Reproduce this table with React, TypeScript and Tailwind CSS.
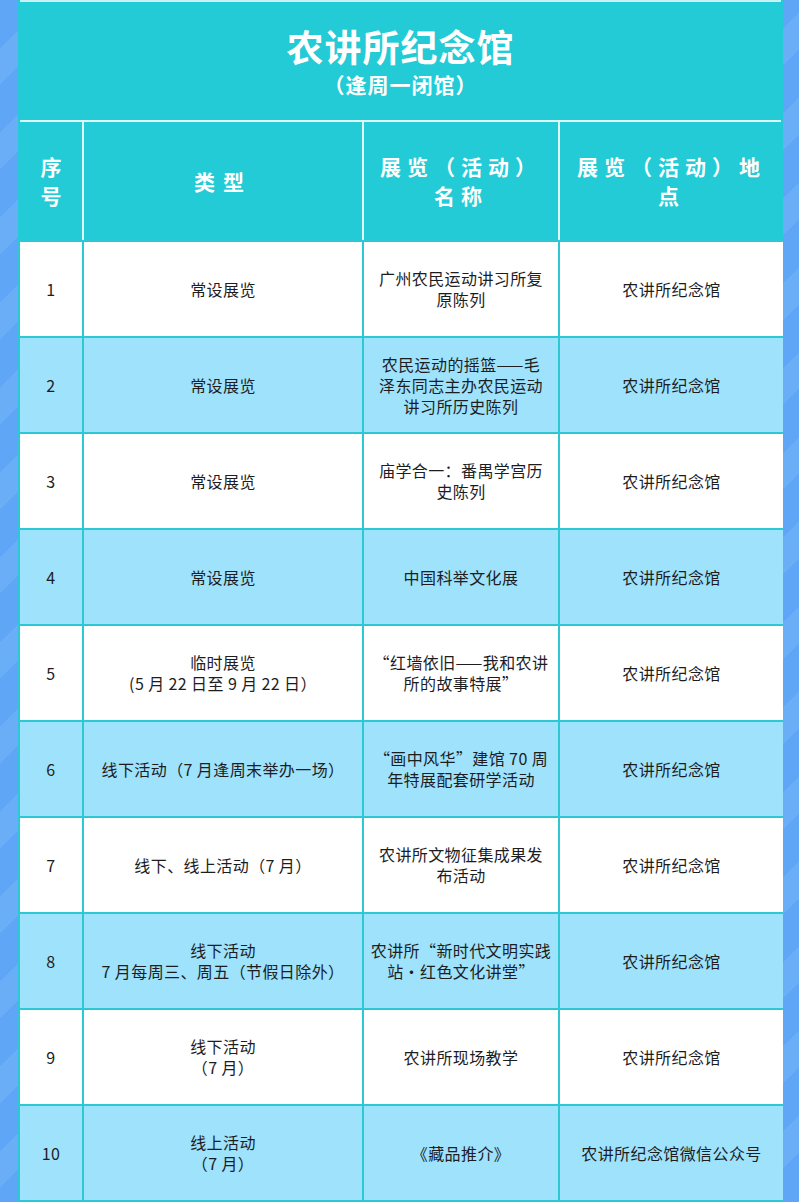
import * as React from 'react'

const rows: { no: string; type: string[]; name: string[]; place: string }[] = [
  { no: '1', type: ['常设展览'], name: ['广州农民运动讲习所复', '原陈列'], place: '农讲所纪念馆' },
  { no: '2', type: ['常设展览'], name: ['农民运动的摇篮——毛', '泽东同志主办农民运动', '讲习所历史陈列'], place: '农讲所纪念馆' },
  { no: '3', type: ['常设展览'], name: ['庙学合一：番禺学宫历', '史陈列'], place: '农讲所纪念馆' },
  { no: '4', type: ['常设展览'], name: ['中国科举文化展'], place: '农讲所纪念馆' },
  { no: '5', type: ['临时展览', '(5 月 22 日至 9 月 22 日）'], name: ['“红墙依旧——我和农讲', '所的故事特展”'], place: '农讲所纪念馆' },
  { no: '6', type: ['线下活动（7 月逢周末举办一场）'], name: ['“画中风华”建馆 70 周', '年特展配套研学活动'], place: '农讲所纪念馆' },
  { no: '7', type: ['线下、线上活动（7 月）'], name: ['农讲所文物征集成果发', '布活动'], place: '农讲所纪念馆' },
  { no: '8', type: ['线下活动', '7 月每周三、周五（节假日除外）'], name: ['农讲所“新时代文明实践', '站·红色文化讲堂”'], place: '农讲所纪念馆' },
  { no: '9', type: ['线下活动', '（7 月）'], name: ['农讲所现场教学'], place: '农讲所纪念馆' },
  { no: '10', type: ['线上活动', '（7 月）'], name: ['《藏品推介》'], place: '农讲所纪念馆微信公众号' },
]

function Lines({ lines }: { lines: string[] }) {
  return (
    <div className="text-center">
      {lines.map((l, i) => (
        <div key={i}>{l}</div>
      ))}
    </div>
  )
}

export default function App() {
  return (
    <div className="w-[799px] h-[1202px] overflow-hidden px-[18px] bg-[repeating-linear-gradient(135deg,#5fa6f7_0px,#5fa6f7_34px,#6aaef8_34px,#6aaef8_60px)] font-['Noto_Sans_CJK_SC','Noto_Sans',sans-serif]">
      <div className="w-[765px] border-x-2 border-[#22cbd6]">
        {/* Title */}
        <div className="h-[120px] border-t-2 border-[#c9f1f4] bg-[#22cbd6] flex flex-col items-center justify-center text-white font-bold">
          <div className="text-[37px] leading-[44px] tracking-[1px]">农讲所纪念馆</div>
          <div className="text-[21px] leading-[28px] mt-[2px] tracking-[1px]">（逢周一闭馆）</div>
        </div>

        {/* Header row */}
        <div className="grid grid-cols-[62px_278px_194px_223px] gap-x-[2px] border-t-2 border-[#dff7f9] bg-[#dff7f9] text-white font-bold text-[21px] leading-[29px]">
          <div className="h-[118px] -ml-[2px] pl-[2px] bg-[#22cbd6] flex items-center justify-center text-center">
            <div>序<br />号</div>
          </div>
          <div className="h-[118px] bg-[#22cbd6] flex items-center justify-center tracking-[8px]">类型</div>
          <div className="h-[118px] bg-[#22cbd6] flex items-center justify-center text-center tracking-[6px]">
            <div>展览（活动）<br />名称</div>
          </div>
          <div className="h-[118px] bg-[#22cbd6] flex items-center justify-center text-center tracking-[6px]">
            <div>展览（活动）地<br />点</div>
          </div>
        </div>

        {/* Body */}
        <div className="grid grid-cols-[62px_278px_194px_223px] gap-[2px] py-[2px] -mx-[2px] px-[2px] bg-[#2cc8d4] text-[16px] leading-[21px] text-[#1d1d1f] tracking-[0.4px]">
          {rows.map((r, i) => {
            const bg = i % 2 === 0 ? 'bg-white' : 'bg-[#9ee2fc]'
            return (
              <React.Fragment key={r.no}>
                <div className={`h-[94px] flex items-center justify-center ${bg}`}>{r.no}</div>
                <div className={`h-[94px] flex items-center justify-center ${bg}`}>
                  <Lines lines={r.type} />
                </div>
                <div className={`h-[94px] flex items-center justify-center ${bg}`}>
                  <Lines lines={r.name} />
                </div>
                <div className={`h-[94px] flex items-center justify-center ${bg}`}>{r.place}</div>
              </React.Fragment>
            )
          })}
        </div>
      </div>
    </div>
  )
}
